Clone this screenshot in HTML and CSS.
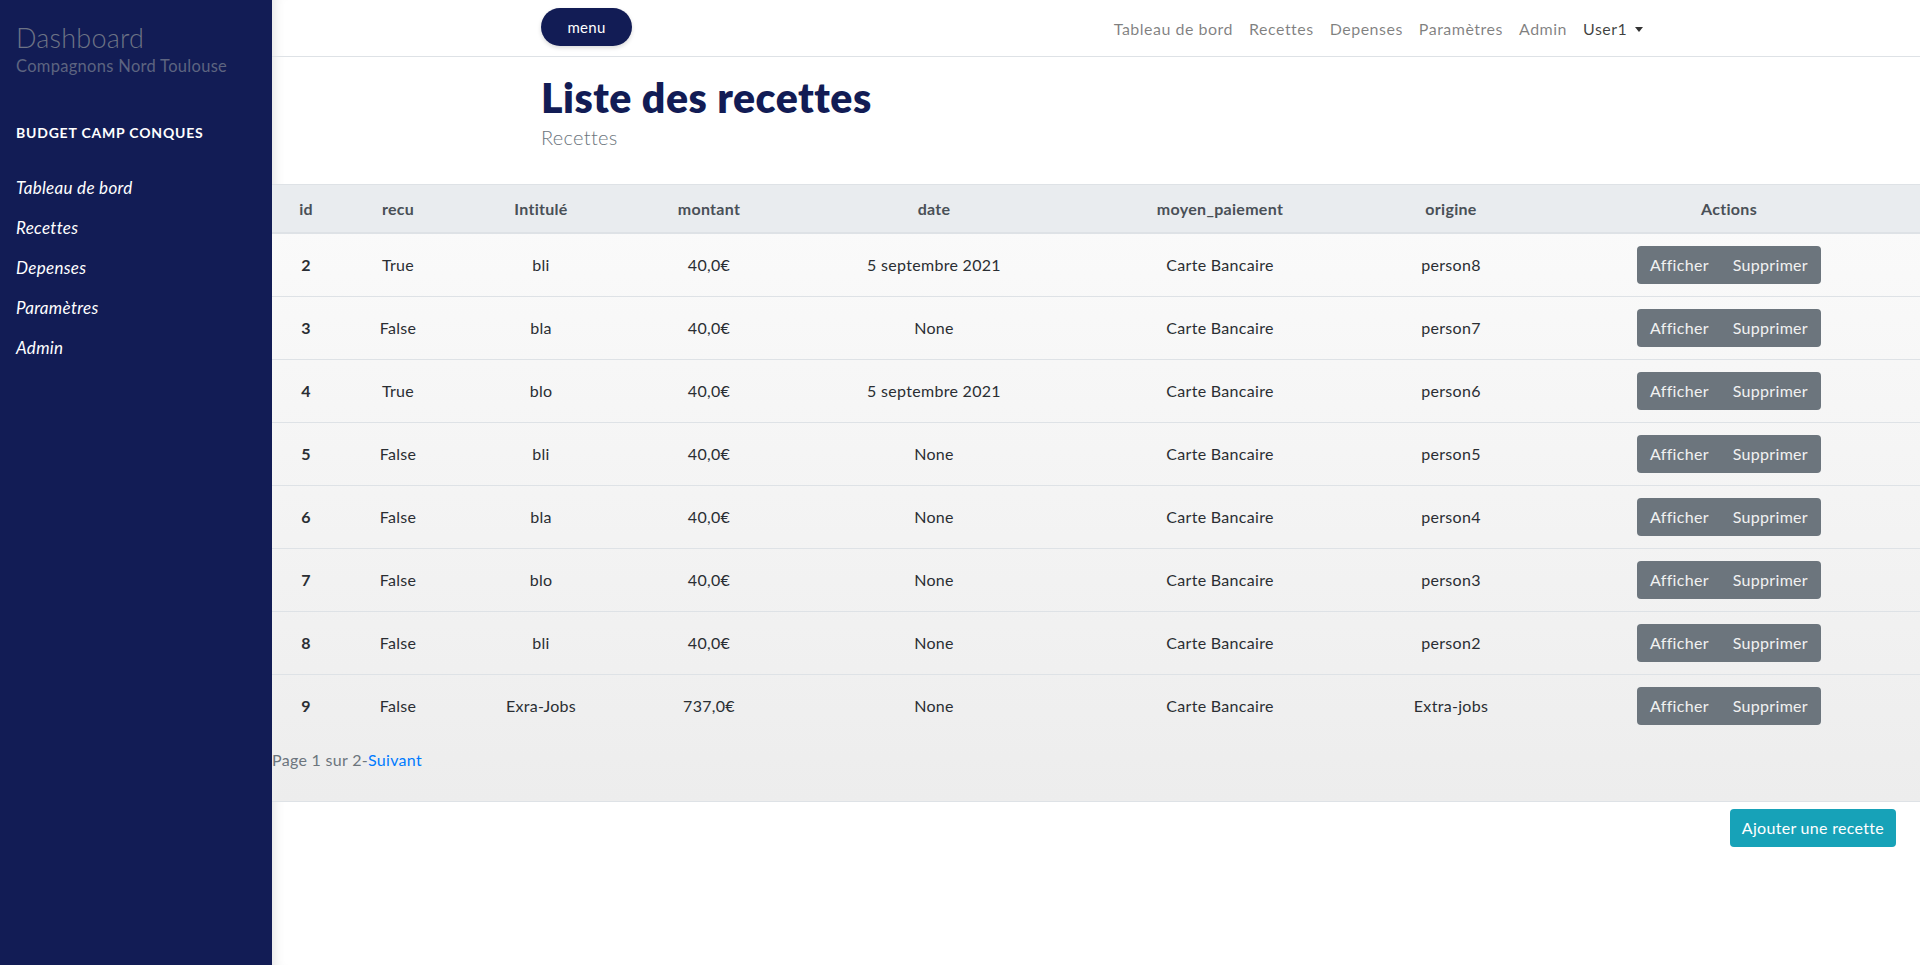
FILE: index.html
```html
<!DOCTYPE html>
<html lang="fr">
<head>
<meta charset="utf-8">
<title>Liste des recettes</title>
<link rel="stylesheet" href="styles.css">
</head>
<body>
<aside class="sidebar">
  <div class="brand">
    <div class="brand-title">Dashboard</div>
    <div class="brand-sub">Compagnons Nord Toulouse</div>
  </div>
  <div class="side-heading">BUDGET CAMP CONQUES</div>
  <ul class="side-links">
    <li><a href="#">Tableau de bord</a></li>
    <li><a href="#">Recettes</a></li>
    <li><a href="#">Depenses</a></li>
    <li><a href="#">Paramètres</a></li>
    <li><a href="#">Admin</a></li>
  </ul>
</aside>
<main class="main">
  <nav class="topbar">
    <div class="container topbar-inner">
      <button class="menu-btn">menu</button>
      <ul class="top-links">
        <li><a href="#">Tableau de bord</a></li>
        <li><a href="#">Recettes</a></li>
        <li><a href="#">Depenses</a></li>
        <li><a href="#">Paramètres</a></li>
        <li><a href="#">Admin</a></li>
        <li><a href="#" class="user">User1 <span class="caret"></span></a></li>
      </ul>
    </div>
  </nav>
  <header class="container page-head">
    <h1>Liste des recettes</h1>
    <p class="subtitle">Recettes</p>
  </header>
  <section class="table-zone">
    <table class="data">
      <colgroup>
        <col class="c-id"><col class="c-recu"><col class="c-int"><col class="c-mont"><col class="c-date"><col class="c-moyen"><col class="c-orig"><col class="c-act">
      </colgroup>
      <thead>
        <tr><th>id</th><th>recu</th><th>Intitulé</th><th>montant</th><th>date</th><th>moyen_paiement</th><th>origine</th><th>Actions</th></tr>
      </thead>
      <tbody>
        <tr><td class="idc">2</td><td>True</td><td>bli</td><td>40,0€</td><td>5 septembre 2021</td><td>Carte Bancaire</td><td>person8</td><td><div class="btn-group"><a class="btn-g" href="#">Afficher</a><a class="btn-g" href="#">Supprimer</a></div></td></tr>
        <tr><td class="idc">3</td><td>False</td><td>bla</td><td>40,0€</td><td>None</td><td>Carte Bancaire</td><td>person7</td><td><div class="btn-group"><a class="btn-g" href="#">Afficher</a><a class="btn-g" href="#">Supprimer</a></div></td></tr>
        <tr><td class="idc">4</td><td>True</td><td>blo</td><td>40,0€</td><td>5 septembre 2021</td><td>Carte Bancaire</td><td>person6</td><td><div class="btn-group"><a class="btn-g" href="#">Afficher</a><a class="btn-g" href="#">Supprimer</a></div></td></tr>
        <tr><td class="idc">5</td><td>False</td><td>bli</td><td>40,0€</td><td>None</td><td>Carte Bancaire</td><td>person5</td><td><div class="btn-group"><a class="btn-g" href="#">Afficher</a><a class="btn-g" href="#">Supprimer</a></div></td></tr>
        <tr><td class="idc">6</td><td>False</td><td>bla</td><td>40,0€</td><td>None</td><td>Carte Bancaire</td><td>person4</td><td><div class="btn-group"><a class="btn-g" href="#">Afficher</a><a class="btn-g" href="#">Supprimer</a></div></td></tr>
        <tr><td class="idc">7</td><td>False</td><td>blo</td><td>40,0€</td><td>None</td><td>Carte Bancaire</td><td>person3</td><td><div class="btn-group"><a class="btn-g" href="#">Afficher</a><a class="btn-g" href="#">Supprimer</a></div></td></tr>
        <tr><td class="idc">8</td><td>False</td><td>bli</td><td>40,0€</td><td>None</td><td>Carte Bancaire</td><td>person2</td><td><div class="btn-group"><a class="btn-g" href="#">Afficher</a><a class="btn-g" href="#">Supprimer</a></div></td></tr>
        <tr><td class="idc">9</td><td>False</td><td>Exra-Jobs</td><td>737,0€</td><td>None</td><td>Carte Bancaire</td><td>Extra-jobs</td><td><div class="btn-group"><a class="btn-g" href="#">Afficher</a><a class="btn-g" href="#">Supprimer</a></div></td></tr>
      </tbody>
    </table>
    <p class="pager">Page 1 sur 2-<a href="#">Suivant</a></p>
  </section>
  <div class="add-row">
    <a class="btn-add" href="#">Ajouter une recette</a>
  </div>
</main>
</body>
</html>
```

FILE: styles.css
```css
* { box-sizing: border-box; }
html, body { margin: 0; padding: 0; }
body {
  font-family: "Lato", "Open Sans", "Liberation Sans", sans-serif;
  font-size: 16px;
  letter-spacing: 0.3px;
  color: #212529;
  display: flex;
  min-height: 965px;
  background: #fff;
}
a { text-decoration: none; }

.sidebar {
  width: 272px;
  flex: 0 0 272px;
  background: #121c55;
  min-height: 965px;
  padding: 21px 16px 0 16px;
}
.brand-title {
  font-size: 27px;
  color: #6d7385;
  line-height: 34px;
  font-weight: 300;
  letter-spacing: 0.2px;
}
.brand-sub {
  font-size: 16.5px;
  color: #5d6480;
  line-height: 22px;
  margin-top: 0;
}
.side-heading {
  margin-top: 46px;
  color: #fff;
  font-weight: 700;
  font-size: 14px;
  letter-spacing: 0.8px;
  line-height: 20px;
}
.side-links {
  list-style: none;
  margin: 32px 0 0 0;
  padding: 0;
}
.side-links li { height: 40px; line-height: 26px; }
.side-links a {
  color: #fff;
  font-style: italic;
  font-size: 17px;
}

.main {
  flex: 1;
  min-width: 0;
  box-shadow: inset 12px 0 12px -10px rgba(0,0,0,0.12);
}
.container {
  width: 1140px;
  margin: 0 auto;
  padding: 0 15px;
}
.topbar {
  height: 57px;
  border-bottom: 1px solid #dee2e6;
}
.topbar-inner {
  display: flex;
  align-items: center;
  justify-content: space-between;
  height: 56px;
}
.menu-btn {
  width: 91px;
  height: 38px;
  border: none;
  border-radius: 19px;
  background: #121c55;
  color: #fff;
  font-family: inherit;
  font-size: 15px;
  letter-spacing: 0.3px;
  box-shadow: 0 2px 4px rgba(0,0,0,0.15);
  margin-top: -2px;
}
.top-links {
  list-style: none;
  display: flex;
  margin: 0 8px 0 0;
  padding: 0;
  gap: 16px;
}
.top-links a {
  color: rgba(0,0,0,0.5);
  font-size: 16px;
  letter-spacing: 0.5px;
}
.top-links a.user { color: rgba(0,0,0,0.75); }
.caret {
  display: inline-block;
  width: 0; height: 0;
  border-left: 4px solid transparent;
  border-right: 4px solid transparent;
  border-top: 5px solid #333;
  vertical-align: 3px;
  margin-left: 3px;
}

.page-head { padding-top: 17px; padding-bottom: 32px; }
.page-head h1 {
  margin: 0;
  font-size: 41px;
  line-height: 48px;
  color: #121c55;
  font-weight: 800;
  letter-spacing: 0.5px;
}
.subtitle {
  margin: 0;
  font-size: 20px;
  line-height: 30px;
  color: #6c757d;
  font-weight: 300;
}

.table-zone {
  background: linear-gradient(#fbfbfb, #ededed);
  border-top: 1px solid #dee2e6;
  border-bottom: 1px solid #dee2e6;
}
.data {
  width: 100%;
  border-collapse: collapse;
  table-layout: fixed;
}
.c-id { width: 68px; }
.c-recu { width: 116px; }
.c-int { width: 170px; }
.c-mont { width: 166px; }
.c-date { width: 284px; }
.c-moyen { width: 288px; }
.c-orig { width: 174px; }
.data th {
  background: #e9ecef;
  color: #495057;
  font-weight: 700;
  height: 48px;
  border-bottom: 2px solid #dee2e6;
  text-align: center;
  font-size: 16px;
}
.data td {
  height: 63px;
  text-align: center;
  border-top: 1px solid #dee2e6;
  color: #2a2e33;
}
.data tbody tr:first-child td { border-top: none; }
.data td.idc { font-weight: 700; }
.btn-group {
  display: inline-flex;
  background: #6c757d;
  border-radius: 4px;
  height: 38px;
  align-items: center;
  padding: 0 1px;
}
.btn-g {
  color: #f1f1f1;
  padding: 0 12px;
  line-height: 38px;
}
.pager {
  margin: 0;
  padding: 11px 0 29px 0;
  color: #6c757d;
  line-height: 24px;
}
.pager a { color: #007bff; }

.add-row {
  display: flex;
  justify-content: flex-end;
  padding: 7px 24px 0 0;
}
.btn-add {
  background: #17a2b8;
  color: #fff;
  border-radius: 4px;
  height: 38px;
  line-height: 38px;
  padding: 0 12px;
  font-size: 16px;
}
```
